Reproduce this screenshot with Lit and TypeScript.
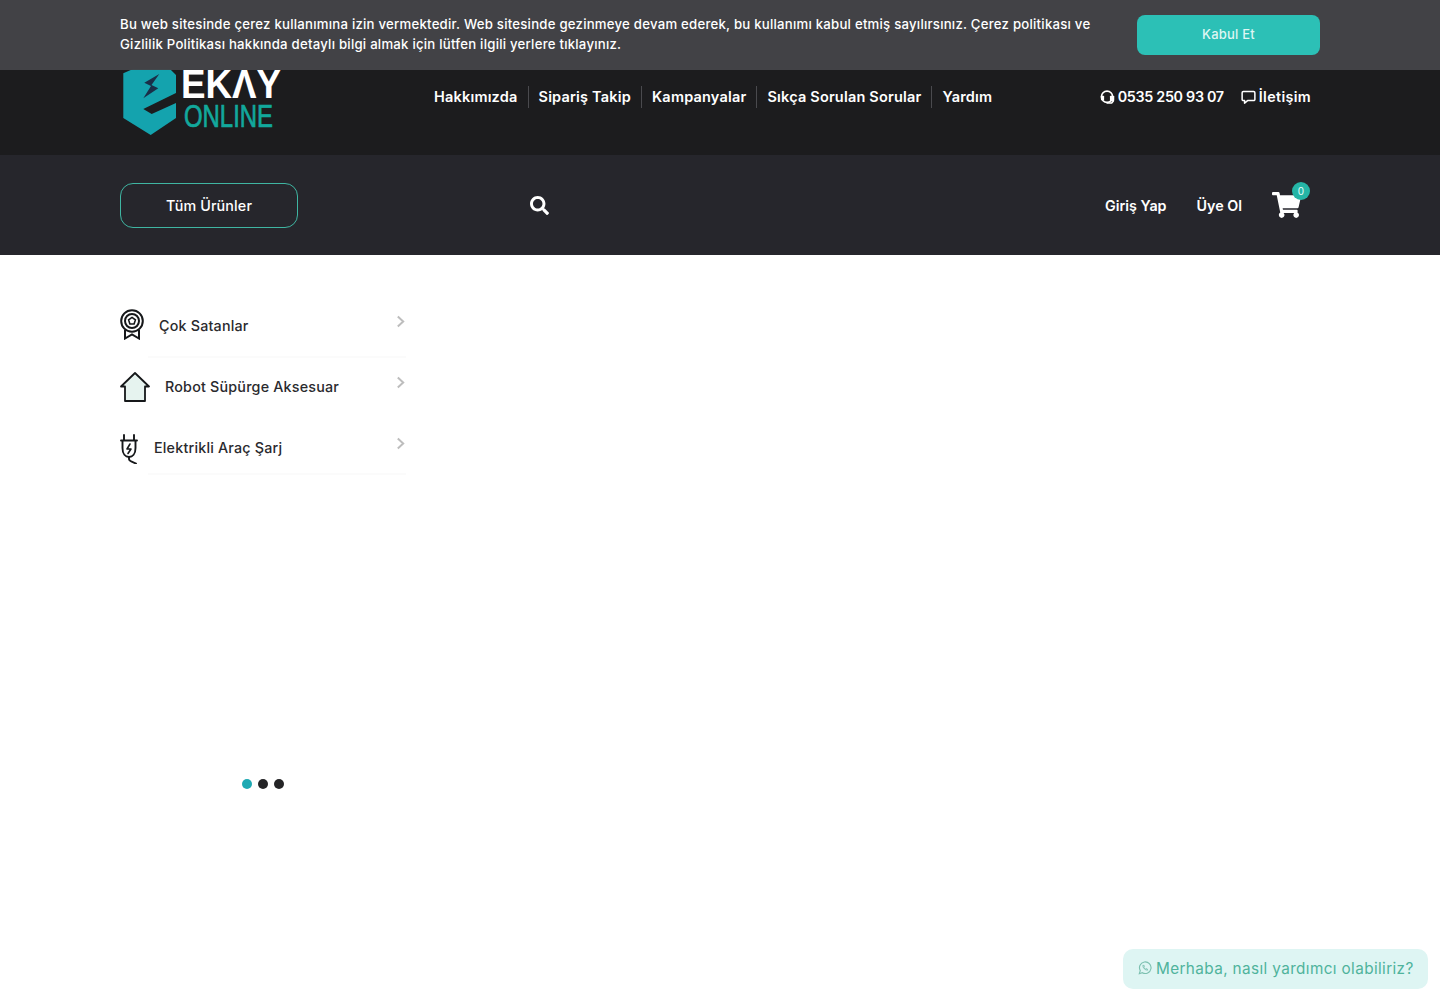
import { LitElement, html, css } from "lit";
import { customElement } from "lit/decorators.js";

const chevron = html`<svg class="chev" viewBox="0 0 10 14" width="9" height="13"><path d="M2 1.5 L8 7 L2 12.5" fill="none" stroke="#bdbdbd" stroke-width="2.2"/></svg>`;

const medal = html`<svg class="ico medal" viewBox="0 0 24 31" width="24" height="31" fill="none" stroke="#16181a" stroke-width="2">
  <path d="M5 21 V29.5 L12 25.5 L19 29.5 V21" fill="#fff"/>
  <circle cx="12" cy="12" r="10.8" fill="#fff"/><circle cx="12" cy="12" r="7"/>
  <path d="M12 8.4 L15.4 10.9 L14.1 15 H9.9 L8.6 10.9 Z" stroke-width="1.6"/>
</svg>`;
const house = html`<svg class="ico" viewBox="0 0 30 30" width="30" height="30" fill="#e6f3ef" stroke="#16181a" stroke-width="1.8" stroke-linejoin="round">
  <path d="M1 14.5 L15 1 L29 14.5 H25 V29 H5 V14.5 Z"/>
</svg>`;
const plug = html`<svg class="ico plug" viewBox="0 0 18 30" width="18" height="30" fill="none" stroke="#16181a" stroke-width="1.9" stroke-linecap="round" stroke-linejoin="round">
  <path d="M4 1 V6 M14 1 V6 M1 6.5 H17 M2.5 7 V14 C2.5 20 5.5 23 9 23 C12.5 23 15.5 20 15.5 14 V7"/>
  <path d="M9 23 V25 C9 27.5 13 28 16 29.5"/>
  <path d="M10 10 L7 15 H11 L8 19.5" stroke-width="1.6"/>
</svg>`;

@customElement("app-root")
export class AppRoot extends LitElement {
  static styles = css`
    :host { display: block; position: relative; height: 1000px; background: #fff; overflow: hidden;
      font-family: "Inter", "Liberation Sans", sans-serif; color: #fff; }
    * { box-sizing: border-box; }
    .cookie { position: absolute; left: 0; top: 0; width: 1440px; height: 70px; background: rgba(68,68,72,.96);
      padding: 14px 120px 0; display: flex; justify-content: space-between; align-items: flex-start; z-index: 3; }
    .cookie p { margin: 0; width: 985px; font-size: 13.2px; line-height: 20px; font-weight: 500; letter-spacing: .23px; color: #fff; }
    .accept { width: 183px; height: 40px; margin-top: 1px; padding-bottom: 2px; border-radius: 8px; background: #2cc0b6; display: flex; align-items: center; justify-content: center;
      font-size: 13px; font-weight: 500; letter-spacing: .2px; color: #dff6f3; }
    .top { height: 155px; background: #1c1c1e; padding: 54px 120px 0; display: flex; align-items: flex-start; }
    .logo { width: 162px; height: 84px; flex: none; margin-top: 5px; }
    .menu { display: flex; align-items: center; margin-left: 152px; height: 22px; margin-top: 32px; }
    .menu a { font-size: 14.5px; font-weight: 600; padding: 0 10px; line-height: 22px; letter-spacing: .19px; border-left: 1px solid #4a4a4e; white-space: nowrap; }
    .menu a:first-child { border-left: 0; padding-left: 0; }
    .contact { margin-left: auto; margin-top: 32px; margin-right: 9px; display: flex; align-items: center; gap: 17px; font-size: 14.3px; font-weight: 600; line-height: 22px; white-space: nowrap; }
    .contact span { display: flex; align-items: center; gap: 3px; }
    .phone { letter-spacing: -.3px; }
    .mail { letter-spacing: .35px; }
    .bar { height: 100px; background: #26262c; padding: 28px 120px 0; display: flex; align-items: flex-start; }
    .all { width: 178px; height: 45px; border: 1px solid #3fb5a2; border-radius: 13px; display: flex; align-items: center; justify-content: center; padding-bottom: 1px; font-size: 14.3px; font-weight: 500; letter-spacing: .15px; }
    .search { margin-left: 232px; margin-top: 13px; display: block; }
    .account { margin-left: auto; margin-right: 19px; margin-top: 9px; display: flex; align-items: center; font-size: 14.3px; font-weight: 600; line-height: 22px; }
    .account span { position: relative; top: 1px; }
    .account span + span { margin-left: 30px; }
    .cart { position: relative; margin-left: 30px; width: 29px; height: 26px; display: block; }
    .badge { position: absolute; left: 20px; top: -10px; width: 18px; height: 18px; border-radius: 50%; background: #25b5a6; font-size: 10px; line-height: 18px; text-align: center; color: #e9fffb; font-weight: 400; }
    .side { width: 286px; margin: 40px 0 0 120px; color: #2a2a2e; }
    .row { height: 61px; position: relative; display: flex; align-items: center; font-size: 14.3px; font-weight: 500; letter-spacing: .2px; }
    .row.line::after { content: ""; position: absolute; left: 28px; right: 0; bottom: -2px; height: 2px; background: #fbfbfb; }
    .row.last::after { bottom: 3px; }
    .ico { flex: none; }
    .medal { margin-top: -2px; }
    .plug { margin-top: 2px; }
    .t1 { margin-left: 15px; }
    .t2 { margin-left: 15px; }
    .t3 { margin-left: 16px; }
    .chev { position: absolute; right: 1px; top: 20px; }
    .dots { display: flex; gap: 6px; position: absolute; left: 242px; top: 779px; }
    .dots i { width: 10px; height: 10px; border-radius: 50%; background: #242426; display: block; }
    .dots i:first-child { background: #1ea9b3; }
    .chat { position: absolute; left: 1123px; top: 949px; width: 305px; height: 40px; border-radius: 10px; background: #def5f3;
      display: flex; align-items: center; padding: 0 0 2px 15px; gap: 4px; color: #4fb39c; font-size: 15.3px; letter-spacing: .38px; white-space: nowrap; }
  `;

  render() {
    return html`
      <div class="cookie">
        <p>Bu web sitesinde çerez kullanımına izin vermektedir. Web sitesinde gezinmeye devam ederek, bu kullanımı kabul etmiş sayılırsınız. Çerez politikası ve Gizlilik Politikası hakkında detaylı bilgi almak için lütfen ilgili yerlere tıklayınız.</p>
        <div class="accept">Kabul Et</div>
      </div>
      <div class="top">
        <svg class="logo" viewBox="0 0 162 84">
          <path d="M3.3 14.3 L13 10 H50 L56 16 V34 L23.3 50 L31.7 55 L56 44 V59 L30.7 76 L3.3 59 Z" fill="#14a3ae"/>
          <path d="M39.3 15 L24.3 23.7 L31 27 L23.3 39.3 L38.3 29.3 L31.5 26 Z" fill="#1a2f48"/>
          <text x="61" y="39" fill="#fff" font-family="Liberation Sans" font-weight="700" font-size="40" textLength="100" lengthAdjust="spacingAndGlyphs">EKΛY</text>
          <text x="64" y="68" fill="#12a89c" stroke="#12a89c" stroke-width=".7" font-family="Liberation Sans" font-size="30.5" textLength="89" lengthAdjust="spacingAndGlyphs">ONLINE</text>
        </svg>
        <nav class="menu">
          <a>Hakkımızda</a><a>Sipariş Takip</a><a>Kampanyalar</a><a>Sıkça Sorulan Sorular</a><a>Yardım</a>
        </nav>
        <div class="contact">
          <span class="phone">
            <svg viewBox="0 0 16 16" width="15" height="15" fill="none" stroke="#fff" stroke-width="1.8"><circle cx="7.5" cy="7.2" r="6"/><rect x="1" y="6" width="3.4" height="5" rx="1" fill="#fff" stroke="none"/><rect x="10.6" y="6" width="4.6" height="6" rx="1" fill="#fff" stroke="none"/><path d="M7 13.8 H12.5 L14.5 11.5" stroke-width="1.6"/></svg>
            0535 250 93 07
          </span>
          <span class="mail">
            <svg viewBox="0 0 16 16" width="15" height="15" fill="none" stroke="#fff" stroke-width="1.6" stroke-linejoin="round"><path d="M2.5 1.5 H13.5 A1.3 1.3 0 0 1 14.8 2.8 V10 A1.3 1.3 0 0 1 13.5 11.3 H7 L3.8 14 V11.3 H2.5 A1.3 1.3 0 0 1 1.2 10 V2.8 A1.3 1.3 0 0 1 2.5 1.5 Z"/></svg>
            İletişim
          </span>
        </div>
      </div>
      <div class="bar">
        <div class="all">Tüm Ürünler</div>
        <svg class="search" viewBox="0 0 512 512" width="19" height="19" fill="#fff"><path d="M505 442.7L405.3 343c-4.5-4.5-10.6-7-17-7H372c27.6-35.3 44-79.7 44-128C416 93.1 322.9 0 208 0S0 93.1 0 208s93.1 208 208 208c48.3 0 92.7-16.4 128-44v16.3c0 6.4 2.5 12.5 7 17l99.7 99.7c9.4 9.4 24.6 9.4 33.9 0l28.3-28.3c9.4-9.4 9.4-24.6.1-34zM208 336c-70.7 0-128-57.2-128-128 0-70.7 57.2-128 128-128 70.7 0 128 57.2 128 128 0 70.7-57.2 128-128 128z"/></svg>
        <div class="account">
          <span>Giriş Yap</span><span>Üye Ol</span>
          <div class="cart">
            <svg viewBox="0 0 576 512" width="29" height="26" fill="#fff"><path d="M528.12 301.319l47.273-208C578.806 78.301 567.391 64 551.99 64H159.208l-9.166-44.81C147.758 8.021 137.93 0 126.529 0H24C10.745 0 0 10.745 0 24v16c0 13.255 10.745 24 24 24h69.883l70.248 343.435C147.325 417.1 136 435.222 136 456c0 30.928 25.072 56 56 56s56-25.072 56-56c0-15.674-6.447-29.835-16.824-40h209.647C430.447 426.165 424 440.326 424 456c0 30.928 25.072 56 56 56s56-25.072 56-56c0-22.172-12.888-41.332-31.579-50.405l5.517-24.276c3.413-15.018-8.002-29.319-23.403-29.319H218.117l-6.545-32h293.145c11.206 0 20.92-7.754 23.403-18.681z"/></svg>
            <div class="badge">0</div>
          </div>
        </div>
      </div>
      <div class="side">
        <div class="row line">${medal}<span class="t1">Çok Satanlar</span>${chevron}</div>
        <div class="row">${house}<span class="t2">Robot Süpürge Aksesuar</span>${chevron}</div>
        <div class="row line last">${plug}<span class="t3">Elektrikli Araç Şarj</span>${chevron}</div>
      </div>
      <div class="dots"><i></i><i></i><i></i></div>
      <div class="chat">
        <svg viewBox="0 0 16 16" width="14" height="14" fill="none" stroke="#7cc0b0" stroke-width="1.3"><path d="M1.5 14.5 L2.6 11 A6.6 6.6 0 1 1 5 13.4 Z"/><path d="M5.5 5 C5.5 8 8 10.5 11 10.5 L10.5 9 L9 8.8 L8.4 9.2 C7.5 8.8 7 8.2 6.8 7.5 L7.2 7 L7 5 Z" stroke-width="1"/></svg>
        <span>Merhaba, nasıl yardımcı olabiliriz?</span>
      </div>
    `;
  }
}
